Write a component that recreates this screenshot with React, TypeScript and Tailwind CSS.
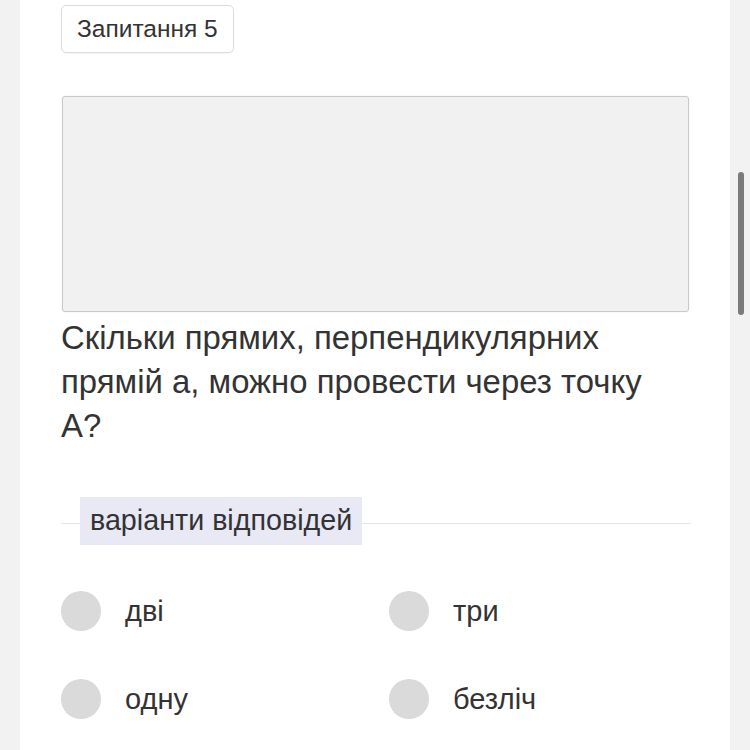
import React from "react";

const font = { fontFamily: '"Liberation Sans", Arial, sans-serif' };

function Option({ label }: { label: string }) {
  return (
    <div className="flex items-center h-[40px]">
      <div className="w-[40px] h-[40px] rounded-full bg-[#dadada] shrink-0" />
      <span className="ml-[24px] text-[29px] text-[#333333] leading-none">{label}</span>
    </div>
  );
}

export default function App() {
  return (
    <div className="w-[750px] h-[750px] overflow-hidden bg-[#f2f2f2] flex" style={font}>
      <div className="ml-[20px] w-[710px] h-full bg-white">
        <div className="pl-[41px] pr-[41px] pt-[5px]">
          <div className="inline-flex items-center h-[48px] px-[15px] border border-[#dcdcdc] rounded-[5px] text-[24.5px] text-[#333333] shadow-[0_1px_1px_rgba(0,0,0,0.04)]">
            Запитання 5
          </div>
          <div className="mt-[43px] ml-[1px] w-[627px] h-[216px] bg-[#f1f1f1] border border-[#c9c9c9] rounded-[3px] shadow-[0_0_2px_rgba(0,0,0,0.08)]" />
          <p className="mt-[4px] text-[32.9px] leading-[44px] text-[#333333] w-[605px]">
            Скільки прямих, перпендикулярних прямій а, можно провести через точку А?
          </p>
          <div className="relative mt-[49px] h-[48px] w-[630px] flex items-center">
            <div className="absolute left-0 right-0 top-[26px] h-[1px] bg-[#e4e4e4]" />
            <div className="relative ml-[19px] h-[48px] px-[10px] flex items-center bg-[#e8e9f5] text-[28.7px] text-[#333333]">
              варіанти відповідей
            </div>
          </div>
          <div className="mt-[46px] grid grid-cols-[328px_1fr] gap-y-[48px] w-[630px]">
            <Option label="дві" />
            <Option label="три" />
            <Option label="одну" />
            <Option label="безліч" />
          </div>
        </div>
      </div>
      <div className="w-[20px] h-full relative">
        <div className="absolute left-[8px] top-[172px] w-[6px] h-[143px] rounded-full bg-[#7b7b7b]" />
      </div>
    </div>
  );
}
